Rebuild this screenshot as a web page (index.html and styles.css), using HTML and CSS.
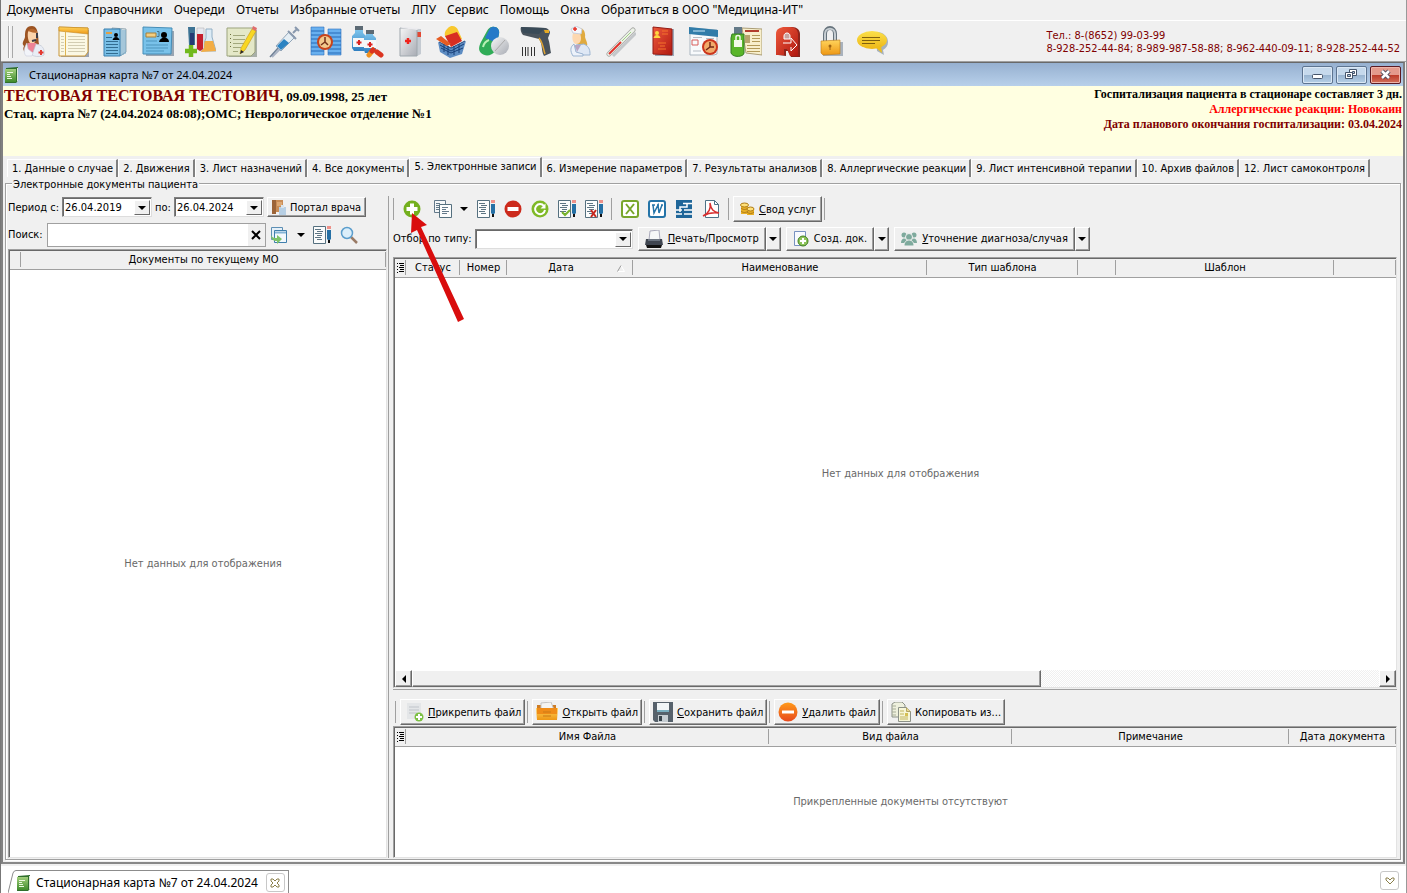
FILE: index.html
```
<!DOCTYPE html>
<html lang="ru">
<head>
<meta charset="utf-8">
<title>Стационарная карта №7 от 24.04.2024</title>
<link rel="stylesheet" href="styles.css">
</head>
<body>
<svg class="defs" aria-hidden="true">
  <defs>
    <linearGradient id="gBlue" x2="0" y2="1"><stop stop-color="#7cc4ec"/><stop offset="1" stop-color="#2f7fc0"/></linearGradient>
    <linearGradient id="gRed" x2="1" y2="1"><stop stop-color="#ee5a3c"/><stop offset="1" stop-color="#b01810"/></linearGradient>
    <linearGradient id="gGold" x2="0" y2="1"><stop stop-color="#ffd45c"/><stop offset="1" stop-color="#ee9714"/></linearGradient>
    <linearGradient id="gLemon" x2="0" y2="1"><stop stop-color="#fbe04a"/><stop offset="1" stop-color="#eeb818"/></linearGradient>
    <linearGradient id="gGreen" x2="0" y2="1"><stop stop-color="#a2cf7c"/><stop offset="1" stop-color="#3f8c2c"/></linearGradient>
    <linearGradient id="gGrey" x2="1" y2="1"><stop stop-color="#f6f6f6"/><stop offset="1" stop-color="#a8acb4"/></linearGradient>
    <linearGradient id="gOrange" x2="0" y2="1"><stop stop-color="#ff9a1a"/><stop offset="1" stop-color="#e8481c"/></linearGradient>
    <symbol id="down" viewBox="0 0 8 4"><path d="M0 0h8L4 4z"/></symbol>
    <symbol id="book" viewBox="0 0 16 16"><path d="M2 1l12-1v14l-2 2H1z" fill="#2f6f2c"/><path d="M1 2h11v13H1z" fill="url(#gGreen)"/><path d="M13 1h1v13l-1 1z" fill="#dfe9dc"/><path d="M3 5.500h6M3 7.500h3M3 9.500h4M3 11.500h5" stroke="#eaf7df"/></symbol>
    <symbol id="sheet" viewBox="0 0 18 18"><path d="M.5.5h12v17H.5z" fill="#fbfcfc" stroke="#55707f"/><path d="M2 3.500h6M4 5.500h6M2 7.500h7M4 9.500h5M2 11.500h6M4 13.500h5" stroke="#5d7583"/></symbol>
    <symbol id="pencil" viewBox="0 0 4 18"><path d="M0 0h4v3H0z" fill="#ee9189"/><path d="M0 4h4v9l-2 2-2-2z" fill="#2670a5"/><path d="M1 14h2v3H1z" fill="#111"/></symbol>
    <symbol id="marks" viewBox="0 0 8 10"><path d="M0 .5h1M0 3.500h1M0 6.500h1M0 9.500h1M2 .5h5M3 2.500h4M2 4.500h5M3 6.500h4M2 8.500h5" stroke="#000"/></symbol>
  </defs>
</svg>

<nav class="menu">
  <a href="#">Документы</a><a href="#">Справочники</a><a href="#">Очереди</a><a href="#">Отчеты</a><a href="#">Избранные отчеты</a><a href="#">ЛПУ</a><a href="#">Сервис</a><a href="#">Помощь</a><a href="#">Окна</a><a href="#">Обратиться в ООО "Медицина-ИТ"</a>
</nav>

<header class="toolbar">
  <div class="launchers">
    <button aria-label="Оператор"><svg viewBox="0 0 32 32"><path d="M16 0C9 0 9 6 9 11c-1 4-4 6-1 9-2 4 1 6 1 6l8-2 6-6c-1-6 0-18-7-18z" fill="#9c5423"/><path d="M12 6c1-3 8-3 9 1 0 6-2 11-5 11s-5-6-4-12z" fill="#fbd3ab"/><path d="M12 5c3-4 8-2 9 2-3 0-6-1-9-2z" fill="#b8692f"/><path d="M12 17h8l2 4-5 8-6-2z" fill="#ee8396"/><path d="M20 18c6 1 9 4 8 11-3 2-9 2-12 0z" fill="#e9edf5" stroke="#b9bfcc" stroke-width=".6"/><path d="M11 17c-3 5-4 9-1 13h6l1-3-5-4z" fill="#f2f4f9" stroke="#c9cedb" stroke-width=".6"/><path d="M21 7v5M16 15l4-1" stroke="#3b3b46" stroke-width="2"/><path d="M25 24v5M22.500 26.500h5" stroke="#e33a30" stroke-width="2"/></svg></button>
    <button aria-label="Журнал"><svg viewBox="0 0 32 32"><path d="M3 4h28v27H3z" fill="#9aa2b0"/><path d="M1 1l29 1v24l-3 4H1z" fill="#fbf8e4" stroke="#c9973a"/><path d="M1 1l29 1v6L1 5z" fill="url(#gGold)" stroke="#c58a25" stroke-width=".6"/><path d="M3 10.500h3M3 13.500h3M3 16.500h3M3 19.500h3M3 22.500h3M3 25.500h3M10 10.500h17M10 13.500h17M10 16.500h17M10 19.500h17M10 22.500h17M10 25.500h17" stroke="#d3cdb2"/><path d="M7.500 6v24" stroke="#ddb453"/></svg></button>
    <button aria-label="Картотека"><svg viewBox="0 0 32 32"><path d="M12 2l14 1v23l-6 4z" fill="#dfe8ec" stroke="#90a5b0"/><path d="M25 4v24M23 4v25M21 3v27" stroke="#6aa5c8"/><path d="M4 3h16v27H4z" fill="#79bfe6" stroke="#397fae"/><path d="M6 7h6" stroke="#e2a045" stroke-width="2"/><path d="M6 11.500h6M6 15.500h12M6 18.500h12M6 21.500h12M6 24.500h12M6 27.500h12" stroke="#326d91"/><circle cx="16" cy="9" r="2"/><path d="M12.500 14c1-4 6-4 7 0z"/></svg></button>
    <button aria-label="Карта пациента"><svg viewBox="0 0 32 32"><path d="M3 4l29 1v25L4 30z" fill="#98a5b2"/><path d="M1 1l29 1-1 26H1z" fill="#79c2ea" stroke="#458db7"/><path d="M4 7h10v4H4z" fill="#f3ce81" stroke="#a98038"/><path d="M15 5.500h2v5h-2" stroke="#41738f" fill="none"/><path d="M4 15h11M4 19h22M4 22h22M4 25h18" stroke="#4f95bd"/><circle cx="22" cy="9" r="3"/><path d="M17 16c1-6 10-6 10 0z"/></svg></button>
    <button aria-label="Анализы"><svg viewBox="0 0 32 32"><path d="M22 3h6v8l4 14H17l5-13z" fill="#dcebf5" stroke="#92afc5"/><path d="M21 15h8l3 10-15 1z" fill="#f3ad44"/><path d="M4 1h7v18H5z" fill="#3d7394"/><path d="M6 7h4v12H6z" fill="#243a73"/><path d="M13 2h7v20l-3 3-4-2z" fill="#e6e8ef" stroke="#aaa" stroke-width=".5"/><path d="M13 8h6v15l-3 2-3-2z" fill="#c51f2d"/><path d="M7 19v12M1 25h12" stroke="#71b91c" stroke-width="4.500"/></svg></button>
    <button aria-label="Запись"><svg viewBox="0 0 32 32"><path d="M3 4h28v27H3z" fill="#a8afa8"/><path d="M1 2h28v24l-4 4H1z" fill="#e4e8c8" stroke="#9ba37c"/><path d="M7 9.500h12M7 13.500h12M7 17.500h11M7 21.500h8M7 25.500h5" stroke="#a2a87d"/><path d="M4 8l1 1M4 12l1 1M4 16l1 1M4 20l1 1" stroke="#6e733f"/><path d="M26 3l4 2-11 19-5 4 1-6z" fill="#f8d722" stroke="#c79518" stroke-width=".6"/><path d="M26 3l1-3 4 2-1 3z" fill="#df6e6e"/><path d="M14 28l1-4 3 2z" fill="#27272c"/></svg></button>
    <button aria-label="Процедуры"><svg viewBox="0 0 32 32"><path d="M4 31l9-9" stroke="#a9b3c4" stroke-width="2"/><path d="M2 31l9-10" stroke="#6f8196" stroke-width="1.500"/><path d="M8 20L21 6l6 5-14 14z" fill="#e5eef4" stroke="#92a5b8"/><path d="M9 20l7-7 5 4-8 7z" fill="#2b83c2"/><path d="M25 7l4-4M27 1l4 4M20 5l8 8" stroke="#8999ae" stroke-width="2"/></svg></button>
    <button aria-label="Расписание"><svg viewBox="0 0 32 32"><path d="M1 1h13v28H1zM18 3h13v26H18z" fill="#68b0ef" stroke="#2d70bd" stroke-width=".6"/><path d="M1 5h13M1 9h13M1 13h13M1 17h13M1 21h13M1 25h13M18 7h13M18 11h13M18 15h13M18 19h13M18 23h13M18 27h13" stroke="#276ab7"/><circle cx="15" cy="16" r="8" fill="#c8441c"/><circle cx="15" cy="16" r="6" fill="#f2c98d"/><path d="M15 11v5l3 3M11 19l4-3" stroke="#743118" stroke-width="1.500" fill="none"/></svg></button>
    <button aria-label="Лекарства"><svg viewBox="0 0 32 32"><path d="M3 4h8v3l3 3v13l-2 2H2l-2-3V10l3-3z" fill="url(#gBlue)"/><path d="M14 7h7v2l3 3v13l-2 2h-9l-1-3V12l2-3z" fill="url(#gBlue)"/><path d="M3 0h8v4H3zM14 4h8v4h-8z" fill="#5c6a74"/><path d="M1 12h11v9H1zM12 14h12v8H12z" fill="#f5f7f8"/><path d="M7 14v5M4.500 16.500h5M18 16v5M15.500 18.500h5" stroke="#db2320" stroke-width="2"/><path d="M17 29l4-5" stroke="#f0901e" stroke-width="5" stroke-linecap="round"/><path d="M21 24l-1 1M25 26l4 3" stroke="#db3420" stroke-width="5" stroke-linecap="round"/></svg></button>
    <button aria-label="Медкнижка"><svg viewBox="0 0 32 32"><path d="M9 3h18v25l-4 2H9z" fill="#c4cad1"/><path d="M23 6h4v5h-4z" fill="#e34832"/><path d="M6 2l17 1v27H6z" fill="url(#gGrey)" stroke="#9ea7ad"/><path d="M6 2l3-1 17 1-3 2" fill="#ececef"/><path d="M14 12v6M11 15h6" stroke="#f0231c" stroke-width="2.500"/></svg></button>
    <button aria-label="Аптека"><svg viewBox="0 0 32 32"><path d="M12 2c4-4 9-1 10 2l4 9-11 6-6-9c-1-4 1-6 3-8z" fill="#f8c82e"/><path d="M9 10l12-4 5 9-11 6z" fill="#d82e22"/><path d="M2 16l13 6 15-7-4 13-12 4-10-6z" fill="#5d8cc2"/><path d="M3 16l12 6 14-7M4 19l11 6 13-7M5 22l10 5 12-5M8 18v8M12 20v9M18 20v9M23 18v9" fill="none" stroke="#173f78"/><path d="M0 13l5-3 10 8-4 2z" fill="#e65c22"/></svg></button>
    <button aria-label="Препараты"><svg viewBox="0 0 32 32"><path d="M14 1c5-1 8 3 7 7l-4 17c-3 5-10 6-14 2-3-3-2-7 0-11l6-11c1-2 3-4 5-4z" fill="#30ac57"/><path d="M14 1c5-1 8 3 7 7l-2 9-12-5 4-8c1-2 2-3 3-3z" fill="#2579c8"/><path d="M5 21c1-4 3-6 6-7" stroke="#baf0b5" stroke-width="2" fill="none"/><circle cx="22" cy="20" r="9" fill="url(#gGrey)"/><path d="M17 25l10-11" stroke="#aaa"/></svg></button>
    <button aria-label="Сканер"><svg viewBox="0 0 32 32"><path d="M1 1l25 1c3 1 4 3 4 5l-2 5c2 5 2 11 3 15l-7 3c-3-5-1-11-5-17L3 9C1 7 0 3 1 1z" fill="#49535c"/><path d="M1 1l24 1-6 6-16-1z" fill="#394a57"/><path d="M24 4h5v3h-4z" fill="#e5aa24"/><path d="M19 12c4 5 4 10 6 16" fill="none" stroke="#e0a435" stroke-width="1.500"/><path d="M2.500 21v9M5.500 21v9M8 21v9M11.500 21v9M14.500 21v9" stroke="#333"/></svg></button>
    <button aria-label="Врач"><svg viewBox="0 0 32 32"><path d="M12 3c8-4 12 2 11 8 1 4 3 6 2 9l-9-1-5-8z" fill="#e0aa3f"/><path d="M11 7c4-3 8 0 8 5s-3 6-5 6-5-4-3-11z" fill="#fdd8b0"/><path d="M9 3l5-3 6 3-1 5-8-1z" fill="#f5f7fb" stroke="#cbd0dc"/><path d="M13 1v4M11 3h4" stroke="#e73428" stroke-width="1.500"/><path d="M14 19l8-1c6 3 6 7 6 11H11z" fill="#dfe8f5" stroke="#9bb4d1"/><path d="M13 19h6l-4 7z" fill="#b9a5c4"/><path d="M12 18c-4 3-4 7-1 12h10v-2l-7-2z" fill="#edf2fa" stroke="#9bb4d1"/></svg></button>
    <button aria-label="Температура"><svg viewBox="0 0 32 32"><path d="M9 30L32 7" stroke="#c4c7ca" stroke-width="3"/><path d="M5 28L29 4" stroke="#a6a7a3" stroke-width="5" stroke-linecap="round"/><path d="M5 28L29 4" stroke="#edf2e8" stroke-width="3.500" stroke-linecap="round"/><path d="M5 28L17 16" stroke="#df332d" stroke-width="2"/><path d="M18 15L27 6" stroke="#9fcf86"/></svg></button>
    <button aria-label="Полис"><svg viewBox="0 0 32 32"><path d="M9 3h19v27H9z" fill="#9ca9b9"/><path d="M7 1l19 2v26L7 28z" fill="url(#gRed)" stroke="#941b14"/><circle cx="11" cy="7" r="2" fill="#ffd63f"/><path d="M7.500 12c1-4 6-4 7 0z" fill="#ffd63f"/><path d="M16 5h6M16 8h6M12 17h8M14 20h5M12 23h8" stroke="#f5742d"/></svg></button>
    <button aria-label="Календарь"><svg viewBox="0 0 32 32"><path d="M2 2l27 2v24l-3 1H2z" fill="#f8fafc" stroke="#abb6c0"/><path d="M1 1l29 3v7L1 8z" fill="#317ca9"/><path d="M5 5h12" stroke="#cde9f8"/><path d="M5 11.500h9M18 12.500h8M15 17h3M15 21h2M5 25h8" stroke="#b6bdc5"/><path d="M4 14h6v5H4z" fill="none" stroke="#d85e5d"/><circle cx="22" cy="21" r="8" fill="#cb361d"/><circle cx="22" cy="21" r="6" fill="#f1aa69"/><path d="M22 16v5h4M18 24l4-3" fill="none" stroke="#742816" stroke-width="1.500"/></svg></button>
    <button aria-label="Защита"><svg viewBox="0 0 32 32"><path d="M12 2l20 1v26l-16-2z" fill="#f8efcc" stroke="#aa9c75"/><path d="M15 5h14" stroke="#b23d2c" stroke-width="2"/><path d="M15 9h5v8h-5z" fill="#b7a46c"/><path d="M22 9.500h8M22 12.500h8M22 15.500h8M17 19.500h13M17 22.500h13M17 25.500h13" stroke="#b39a59"/><path d="M4 1h8v7H4z" fill="#647a88"/><path d="M2 8h12v19c0 4-11 5-13 0V12z" fill="#59b52a" stroke="#347e23"/><path d="M4 14h8v7H4z" fill="#f2fae9"/><path d="M6 14v-3c0-2 4-2 4 0v3" stroke="#f2fae9" stroke-width="1.500" fill="none"/></svg></button>
    <button aria-label="Регистр"><svg viewBox="0 0 32 32"><path d="M6 29V8c0-5 4-7 10-7h4c5 0 8 3 8 7v23h-9l-3-6h-2v5z" fill="#8d241b"/><path d="M4 29V8c0-5 4-7 9-7h5c5 0 8 3 8 7v22h-8l-3-7h-3v6z" fill="url(#gRed)"/><path d="M12 13v-3c0-4 6-4 6 0v3z" fill="#c9a29e" stroke="#fff"/><path d="M11 17h8v-5l6 7-6 6v-4" fill="none" stroke="#fff"/></svg></button>
    <button aria-label="Блокировка"><svg viewBox="0 0 32 32"><path d="M9 16h20v14H9z" fill="#a9b2bd"/><path d="M11 15V8c0-8 10-8 10 0v7" fill="none" stroke="#66737c" stroke-width="4"/><path d="M11 15V8c0-7 10-7 10 0v7" fill="none" stroke="#c5ccd1" stroke-width="2"/><path d="M7 15l19-1v14L9 29l-2-2z" fill="url(#gGold)" stroke="#bd7b18" stroke-width=".6"/><circle cx="16" cy="20" r="1.500" fill="#a16512"/><path d="M16 20v4" stroke="#a16512"/></svg></button>
    <button aria-label="Сообщения"><svg viewBox="0 0 32 32"><path d="M20 6c8 0 12 5 12 10 0 4-2 6-5 8l1 5-7-4" fill="#a7b2bd"/><ellipse cx="16" cy="14" rx="15" ry="9" fill="url(#gLemon)"/><path d="M19 21l7 6-1-8z" fill="#efbe1b"/><path d="M6 11.500h18M6 14.500h18M6 17.500h13" stroke="#80600f"/></svg></button>
  </div>
  <address class="phones">Тел.: 8-(8652) 99-03-99<br>8-928-252-44-84; 8-989-987-58-88; 8-962-440-09-11; 8-928-252-44-52</address>
</header>

<main class="window">
  <div class="titlebar">
    <svg class="i16"><use href="#book"/></svg>
    <h1>Стационарная карта №7 от 24.04.2024</h1>
    <button class="wbtn" aria-label="Свернуть"><svg viewBox="0 0 29 16"><rect x="9.500" y="7.500" width="10" height="4" rx="1" fill="#fff" stroke="#46556b"/></svg></button>
    <button class="wbtn" aria-label="Восстановить"><svg viewBox="0 0 29 16"><path d="M12.500 2.500h7v6h-7z" fill="#fff" stroke="#46556b"/><path d="M15.500 4.500h2v2h-2z" stroke="#46556b" fill="#b7cbe0"/><path d="M8.500 5.500h7v6h-7z" fill="#fff" stroke="#46556b"/><path d="M10.500 7.500h3v2h-3z" stroke="#46556b" fill="#b7cbe0"/></svg></button>
    <button class="wbtn close" aria-label="Закрыть"><svg viewBox="0 0 29 16"><path d="M11 4l7 7M18 4l-7 7" stroke="#4b4a5a" stroke-width="4.500"/><path d="M11 4l7 7M18 4l-7 7" stroke="#fff" stroke-width="2.500"/></svg></button>
  </div>

  <section class="patient">
    <div>
      <p class="name"><b>ТЕСТОВАЯ ТЕСТОВАЯ ТЕСТОВИЧ</b>, 09.09.1998, 25 лет</p>
      <p>Стац. карта №7 (24.04.2024 08:08);ОМС; Неврологическое отделение №1</p>
    </div>
    <div class="alerts">
      <p>Госпитализация пациента в стационаре составляет 3 дн.</p>
      <p class="allergy">Аллергические реакции: Новокаин</p>
      <p class="plan">Дата планового окончания госпитализации: 03.04.2024</p>
    </div>
  </section>

  <div class="tabs" role="tablist">
    <button role="tab">1. Данные о случае</button><button role="tab">2. Движения</button><button role="tab">3. Лист назначений</button><button role="tab">4. Все документы</button><button role="tab" class="active" aria-selected="true">5. Электронные записи</button><button role="tab">6. Измерение параметров</button><button role="tab">7. Результаты анализов</button><button role="tab">8. Аллергические реакции</button><button role="tab">9. Лист интенсивной терапии</button><button role="tab">10. Архив файлов</button><button role="tab">12. Лист самоконтроля</button>
  </div>

  <section class="group">
    <h2>Электронные документы пациента</h2>
    <div class="split">
      <section class="left">
        <div class="row">
          <label for="from">Период с:</label>
          <span class="combo date"><input id="from" value="26.04.2019"><button aria-label="Выбрать дату начала"><svg class="dn"><use href="#down"/></svg></button></span>
          <label for="to">по:</label>
          <span class="combo date"><input id="to" value="26.04.2024"><button aria-label="Выбрать дату окончания"><svg class="dn"><use href="#down"/></svg></button></span>
          <button class="btn portal"><svg class="i16" viewBox="0 0 16 16"><path d="M1 1h11v12H1z" fill="#c98c55"/><path d="M1 1h4v14H1z" fill="#9c6438"/><path d="M6 3h5v4H6z" fill="#dda873"/><path d="M8 8h7v8H8z" fill="#b7cfe4"/><path d="M10 6h3v3h-3z" fill="#d8e5ef"/></svg>Портал врача</button>
        </div>
        <div class="row search">
          <label for="find">Поиск:</label>
          <span class="find"><input id="find"><button aria-label="Очистить"><svg viewBox="0 0 10 10"><path d="M1 1l8 8M9 1L1 9" stroke="#000" stroke-width="2"/></svg></button></span>
          <button class="ico" aria-label="Обновить список"><svg class="i18" viewBox="0 0 18 18"><path d="M1.500 1.500h11v12h-11z" fill="#e5f0f8" stroke="#5d8fb4"/><path d="M4.500 4.500h12v12h-12z" fill="#f2f8fc" stroke="#3f7fac"/><path d="M5 6.500h11" stroke="#84b4d6" stroke-width="2"/><path d="M1 9c1 3 4 3 6 3V9l5 4-5 5v-3c-4 0-6-2-6-6z" fill="#7dc36a"/></svg></button>
          <button class="drop" aria-label="Варианты"><svg class="dn"><use href="#down"/></svg></button>
          <button class="ico" aria-label="Изменить"><svg class="i18" viewBox="0 0 18 18"><use href="#sheet" width="18" height="18"/><use href="#pencil" x="14" width="4" height="18"/></svg></button>
          <button class="ico" aria-label="Найти"><svg class="i18" viewBox="0 0 18 18"><path d="M11 11l6 6" stroke="#9a7b66" stroke-width="2.500"/><circle cx="7" cy="7" r="5.500" fill="#dbeefa" stroke="#5b9dcc" stroke-width="1.500"/></svg></button>
        </div>
        <div class="grid">
          <table><colgroup><col class="c-mark"><col></colgroup><thead><tr><th></th><th>Документы по текущему МО</th></tr></thead></table>
          <p class="empty">Нет данных для отображения</p>
        </div>
      </section>

      <section class="right">
        <svg class="pointer" viewBox="0 0 56 112" aria-hidden="true"><path d="M1 1l15 12-6 2 43 92-6 3L6 18l-6 3z" fill="#d90d0d"/></svg>
        <div class="row tools">
          <i class="edge"></i>
          <button class="ico" aria-label="Добавить"><svg class="i18" viewBox="0 0 18 18"><circle cx="9" cy="9" r="8.500" fill="#74b01e"/><path d="M9 3.500v11M3.500 9h11" stroke="#fff" stroke-width="4"/></svg></button>
          <button class="ico copy" aria-label="Копировать"><svg class="i18" viewBox="0 0 18 18"><path d="M.5.500h11v12H.5z" fill="#f5f7f8" stroke="#63798a"/><path d="M2 3.500h4M2 5.500h3M2 7.500h3M2 9.500h3" stroke="#63798a"/><path d="M5.500 4.500h12v13h-12z" fill="#fbfcfc" stroke="#55707f"/><path d="M8 7.500h6M8 9.500h4M8 11.500h7M8 13.500h5" stroke="#63798a"/></svg></button>
          <button class="drop" aria-label="Варианты копирования"><svg class="dn"><use href="#down"/></svg></button>
          <button class="ico" aria-label="Редактировать"><svg class="i18" viewBox="0 0 18 18"><use href="#sheet" width="18" height="18"/><use href="#pencil" x="14" width="4" height="18"/></svg></button>
          <button class="ico" aria-label="Удалить"><svg class="i18" viewBox="0 0 18 18"><circle cx="9" cy="9" r="8.500" fill="#cc2a1c"/><path d="M3.500 9h11" stroke="#fff" stroke-width="4"/></svg></button>
          <button class="ico" aria-label="Обновить"><svg class="i18" viewBox="0 0 18 18"><circle cx="9" cy="9" r="8.500" fill="#7fb927"/><path d="M13 6a5 5 0 1 0 1 4" fill="none" stroke="#fff" stroke-width="2"/><path d="M14.500 3.500v5h-5z" fill="#fff"/></svg></button>
          <button class="ico" aria-label="Подписать"><svg class="i18" viewBox="0 0 18 18"><use href="#sheet" width="18" height="18"/><use href="#pencil" x="14" width="4" height="18"/><path d="M4 12l3 3 5-5" fill="none" stroke="#78b42a" stroke-width="2"/></svg></button>
          <button class="ico" aria-label="Отозвать"><svg class="i18" viewBox="0 0 18 18"><use href="#sheet" width="18" height="18"/><use href="#pencil" x="14" width="4" height="18"/><path d="M6 10l5 7M11 10l-5 7" stroke="#c8281f" stroke-width="2"/></svg></button>
          <i class="sep"></i>
          <button class="ico" aria-label="Excel"><svg class="i18" viewBox="0 0 18 18"><rect x="1" y="1" width="16" height="16" rx="2" fill="#fff" stroke="#78a62c" stroke-width="2"/><path d="M5 4l8 10M13 4L5 14" stroke="#78a62c" stroke-width="2"/></svg></button>
          <button class="ico" aria-label="Word"><svg class="i18" viewBox="0 0 18 18"><rect x="1" y="1" width="16" height="16" rx="2" fill="#fff" stroke="#2474a8" stroke-width="2"/><path d="M4 5h3M5 5l1 8 4-8 1 8 3-8M9 5h2M13 5h2" fill="none" stroke="#2474a8" stroke-width="1.500"/></svg></button>
          <button class="ico" aria-label="Структура"><svg class="i18" viewBox="0 0 18 18"><path d="M1 0h16v18H1z" fill="#1f6699"/><path d="M8 3.500h9M1 10h6M1 14h6M9 10h8M9 14h8" stroke="#fff" stroke-width="1.500"/><path d="M12 3v4H5v5" fill="none" stroke="#fff" stroke-width="1.500"/></svg></button>
          <button class="ico" aria-label="PDF"><svg class="i18" viewBox="0 0 18 18"><path d="M3.500.500h9l4 4v13h-13z" fill="#fff" stroke="#4e7287"/><path d="M12.500.500v4h4" fill="none" stroke="#4e7287"/><path d="M1 16c6-3 8-8 7-13 1 7 4 9 9 10-6-1-11 0-16 3z" fill="none" stroke="#d72f2f" stroke-width="1.500"/></svg></button>
          <i class="sep"></i>
          <button class="btn sum"><svg class="i16" viewBox="0 0 16 16"><path d="M2 4h7v9H2zM8 7h7v7H8z" fill="#e8af26"/><ellipse cx="5.500" cy="4" rx="4" ry="2" fill="#ffe079" stroke="#ae7b17"/><path d="M2 7c2 2 5 2 7 0M2 10c2 2 5 2 7 0M8 11c2 2 5 2 7 0" fill="none" stroke="#ae7b17"/><ellipse cx="11.500" cy="8" rx="3.500" ry="2" fill="#ffe079" stroke="#ae7b17"/></svg><span><u>С</u>вод услуг</span></button>
          <i class="edge"></i>
        </div>
        <div class="row filter">
          <label for="type">Отбор по типу:</label>
          <span class="combo type"><select id="type"><option></option></select><span class="face"><svg class="dn"><use href="#down"/></svg></span></span>
          <span class="duo"><button class="btn"><svg class="i18" viewBox="0 0 18 18"><path d="M5 1l9-1 1 10H4z" fill="#f6f7f8" stroke="#aab"/><path d="M1 9h16l1 6H0z" fill="#3f4550"/><path d="M3 10h12" stroke="#98a3b1"/><path d="M1 15h16l-1 3H2z" fill="#111"/></svg><span><u>П</u>ечать/Просмотр</span></button><button class="btn more" aria-label="Варианты печати"><svg class="dn"><use href="#down"/></svg></button></span>
          <span class="duo"><button class="btn"><svg class="i16" viewBox="0 0 16 16"><path d="M1.500.500h11v14h-11z" fill="#f8fafe" stroke="#7791c0"/><circle cx="10" cy="10" r="5" fill="#8dc35a" stroke="#3f7f1c"/><path d="M10 7v6M7 10h6" stroke="#fff" stroke-width="2"/></svg>Созд. док.</button><button class="btn more" aria-label="Варианты создания"><svg class="dn"><use href="#down"/></svg></button></span>
          <span class="duo"><button class="btn"><svg class="i16" viewBox="0 0 16 16" fill="#7eaa9d"><circle cx="3" cy="4" r="2.500"/><circle cx="13" cy="4" r="2.500"/><circle cx="8" cy="6" r="3.500" stroke="#f0f0f0"/><path d="M0 12c0-6 6-6 6 0zM10 12c0-6 6-6 6 0z"/><path d="M3 15c0-8 10-8 10 0z" stroke="#f0f0f0"/></svg><span><u>У</u>точнение диагноза/случая</span></button><button class="btn more" aria-label="Варианты уточнения"><svg class="dn"><use href="#down"/></svg></button></span>
        </div>
        <div class="grid main">
          <table>
            <colgroup><col class="c-mark"><col class="c-status"><col class="c-num"><col class="c-date"><col class="c-name"><col class="c-kind"><col class="c-flag"><col class="c-tpl"><col></colgroup>
            <thead><tr><th><svg class="marks"><use href="#marks"/></svg></th><th>Статус</th><th>Номер</th><th class="sorted">Дата<svg class="sort" viewBox="0 0 8 7"><path d="M.5 6.500h7L4 .5" fill="none" stroke="#fff"/><path d="M.5 6.500L4 .5" stroke="#999"/></svg></th><th>Наименование</th><th>Тип шаблона</th><th></th><th>Шаблон</th><th></th></tr></thead>
          </table>
          <p class="empty">Нет данных для отображения</p>
          <div class="scroll"><button class="btn" aria-label="Влево"><svg viewBox="0 0 4 8"><path d="M4 0v8L0 4z"/></svg></button><div class="track"><div class="thumb"></div></div><button class="btn" aria-label="Вправо"><svg viewBox="0 0 4 8"><path d="M0 0v8l4-4z"/></svg></button></div>
        </div>
        <div class="files">
          <i class="edge"></i>
          <button class="btn"><svg class="i20" viewBox="0 0 20 20"><path d="M3 1h14v16H3z" fill="#e4e6e8"/><path d="M5 5h10M5 8h10M5 11h8" stroke="#d2d5d9" stroke-width="2"/><circle cx="15" cy="15" r="4.500" fill="#7cc043"/><path d="M15 12v6M12 15h6" stroke="#fff" stroke-width="2"/></svg><span><u>П</u>рикрепить файл</span></button>
          <i class="edge"></i>
          <button class="btn"><svg class="i22" viewBox="0 0 22 20"><path d="M1 3h19v8H1z" fill="#cd7c24"/><path d="M5 1l10-1 3 8H5z" fill="#f4f4f2" stroke="#c2c2c2"/><path d="M0 6h22l-1 12H1z" fill="url(#gGold)"/><path d="M1 6h20v6H1z" fill="#f08c18"/><path d="M7 10h8M7 14h8" stroke="#c97a17"/></svg><span><u>О</u>ткрыть файл</span></button>
          <i class="edge"></i>
          <button class="btn"><svg class="i20" viewBox="0 0 20 20"><path d="M0 0h20v20H2l-2-2z" fill="#56616b"/><path d="M4 1h12v9H4z" fill="#f1f5f7"/><path d="M4 8h12v2H4z" fill="#79aebf"/><path d="M5 13h10v7H5z" fill="#c6cdd2"/><path d="M6 14h3v5H6z" fill="#37424a"/></svg><span><u>С</u>охранить файл</span></button>
          <i class="edge"></i>
          <button class="btn"><svg class="i20" viewBox="0 0 20 20"><circle cx="10" cy="10" r="9.500" fill="url(#gOrange)"/><path d="M4 10h12" stroke="#fff" stroke-width="3"/></svg><span><u>У</u>далить файл</span></button>
          <i class="edge"></i>
          <button class="btn"><svg class="i20" viewBox="0 0 20 20"><path d="M1 2l3-2h7l3 3v12H1z" fill="#eef0dd" stroke="#8c9188"/><path d="M1 4h4M1 7h4M1 10h4M1 13h4" stroke="#a8ad98"/><path d="M7.500 5.500h8l4 4v10h-12z" fill="#f7f6d6" stroke="#8c9188"/><path d="M15.500 5.500v4h4" fill="#ecd98b" stroke="#b2a563"/><path d="M9 9h4M9 12h4M9 15h8M9 17h8" stroke="#c1b45e"/><path d="M14 11h3v3h-3z" fill="#d5c053"/></svg>Копировать из...</button>
        </div>
        <div class="grid attach">
          <table>
            <colgroup><col class="c-mark"><col class="p-file"><col class="p-kind"><col class="p-note"><col></colgroup>
            <thead><tr><th><svg class="marks"><use href="#marks"/></svg></th><th>Имя Файла</th><th>Вид файла</th><th>Примечание</th><th>Дата документа</th></tr></thead>
          </table>
          <p class="empty">Прикрепленные документы отсутствуют</p>
        </div>
      </section>
    </div>
  </section>
</main>

<footer class="dock">
  <svg class="slant" viewBox="0 0 8 23"><path d="M0 23L5 3Q6 .5 8 .5" fill="none" stroke="#8c8c8c"/></svg>
  <div class="doc"><svg class="i16"><use href="#book"/></svg><a href="#">Стационарная карта №7 от 24.04.2024</a><button aria-label="Закрыть вкладку"><svg viewBox="0 0 10 10"><path d="M1 1h2l2 2 2-2h2v2L7 5l2 2v2H7L5 7 3 9H1V7l2-2-2-2z" fill="#fff" stroke="#8a7f4a"/></svg></button></div>
  <button class="all" aria-label="Список окон"><svg viewBox="0 0 10 8"><path d="M1 1h2l2 2 2-2h2v2L5 7 1 3z" fill="#fff" stroke="#8a7f4a"/></svg></button>
</footer>
</body>
</html>
```
FILE: styles.css
```
* { box-sizing: border-box; }
body {
  margin: 0;
  min-height: 100vh;
  display: flex;
  flex-direction: column;
  background: #f0f0f0;
  color: #000;
  font: 11px/13px "DejaVu Sans Condensed", "Noto Sans", sans-serif;
  border-left: 1px solid #777;
  border-right: 1px solid #999;
}
button, input, select { font: inherit; color: inherit; margin: 0; padding: 0; border: 0; background: none; border-radius: 0; }
button { display: flex; align-items: center; justify-content: center; white-space: nowrap; }
p, h1, h2 { margin: 0; }
a { color: inherit; text-decoration: none; }
svg { display: block; flex: none; }
.defs { position: absolute; width: 0; height: 0; }
.i16 { width: 16px; height: 16px; }
.i18 { width: 18px; height: 18px; }
.i20 { width: 20px; height: 20px; }
.i22 { width: 22px; height: 20px; }
.dn { width: 8px; height: 4px; }

.menu { display: flex; gap: 11px; height: 20px; padding-left: 6px; font: 12px/20px "Noto Sans", sans-serif; white-space: nowrap; }
.toolbar { display: flex; align-items: center; justify-content: space-between; height: 42px; padding: 1px 6px 0 7px; border-top: 1px solid #fff; border-bottom: 1px solid #a0a0a0; }
.launchers { display: flex; gap: 10px; padding-left: 7px; border-left: 1px solid #a8a8a8; box-shadow: inset 1px 0 #fff, inset 3px 0 #f0f0f0, inset 4px 0 #a8a8a8; }
.launchers svg { width: 32px; height: 32px; }
.phones { font-style: normal; color: #800000; white-space: nowrap; }

.window { flex: 1; display: flex; flex-direction: column; margin: 0 1px 2px 0; border: 2px solid #808080; border-top: 1px solid #696969; border-bottom-color: #888; }
.titlebar { display: flex; align-items: center; gap: 4px; height: 23px; padding: 0 2px 0 1px; background: linear-gradient(#96b0d0, #b8d0ea); }
.titlebar h1 { flex: 1; padding-left: 5px; font: 11px/22px "Noto Sans", sans-serif; }
.wbtn { width: 31px; height: 18px; border: 1px solid #5d7490; border-radius: 2px; background: linear-gradient(#c6d9ec 50%, #98b3cf 50%, #b6d0e8); box-shadow: inset 0 0 0 1px #dbe8f5; }
.wbtn + .wbtn { margin-left: -1px; }
.wbtn svg { width: 29px; height: 16px; }
.wbtn.close { border-color: #5c1a22; background: linear-gradient(#e49a8c 50%, #bd3a28 50%, #d2705a); box-shadow: inset 0 0 0 1px #eeb5aa; }

.patient { display: flex; justify-content: space-between; height: 70px; padding: 0 1px; background: #ffffe1; font: bold 13px/15px "Liberation Serif", serif; }
.name { line-height: 19px; }
.name b { font-size: 16px; color: #800000; }
.alerts { padding-top: 1px; text-align: right; font-size: 12px; }
.allergy { color: #f00; }
.plan { color: #800000; }

.tabs { display: flex; align-items: flex-end; height: 21px; padding-left: 4px; }
.tabs button { height: 18px; padding: 0 3px 0 4px; border: 1px solid #fff; border-right: 2px solid #808080; border-bottom: 0; }
.tabs .active { height: 20px; padding-bottom: 2px; }

.group { flex: 1; display: flex; flex-direction: column; min-width: 0; margin: 6px 2px 2px; padding: 0 3px 1px 2px; border: 1px solid #a0a0a0; box-shadow: inset 1px 1px #fff, 1px 1px #fff; }
.group h2 { align-self: flex-start; margin: -6px 0 5px 4px; padding: 0 1px; font: inherit; background: #f0f0f0; }
.split { flex: 1; display: flex; gap: 4px; min-width: 0; }
.left { width: 381px; display: flex; flex-direction: column; border-right: 1px solid #a0a0a0; }
.row { display: flex; align-items: center; white-space: nowrap; }
.left .row { gap: 3px; height: 22px; }
.left .search { gap: 0; height: 31px; padding-top: 2px; }
.search label { margin-right: 4px; }
.combo { position: relative; display: flex; height: 20px; border: 1px solid #808080; border-right-color: #ddd; border-bottom-color: #ddd; background: #fff; box-shadow: inset 1px 1px #696969; }
.combo input, .combo select { flex: 1; min-width: 0; padding-left: 2px; appearance: none; outline: 0; }
.combo button, .face { display: flex; align-items: center; justify-content: center; width: 16px; margin: 2px 1px 1px 0; background: #f0f0f0; border: 1px solid #fff; border-right-color: #696969; border-bottom-color: #696969; }
.date { width: 90px; }
.find { display: flex; width: 219px; height: 24px; border: 1px solid #a0a0a0; background: #fff; }
.find input { flex: 1; min-width: 0; outline: 0; }
.find button { width: 17px; background: #f0f0f0; }
.find svg { width: 10px; height: 10px; }
.btn { gap: 4px; background: #f0f0f0; border: 1px solid #fff; border-right-color: #696969; border-bottom-color: #696969; box-shadow: inset -1px -1px #a0a0a0; }
.portal { height: 20px; padding: 0 4px 0 3px; gap: 3px; }
.ico { width: 27px; height: 22px; }
.drop { width: 16px; height: 22px; }

.grid { display: flex; flex-direction: column; background: #fff; border: 1px solid #a0a0a0; border-right-color: #e3e3e3; border-bottom-color: #e3e3e3; box-shadow: inset 1px 1px #696969; padding: 1px 0 0 1px; }
.left .grid { flex: 1; margin-right: 1px; }
table { width: 100%; table-layout: fixed; border-collapse: collapse; }
th { height: 18px; padding: 0; font-weight: normal; background: linear-gradient(#a0a0a0, #a0a0a0) right center / 1px 15px no-repeat #f0f0f0; border-bottom: 1px solid #a0a0a0; white-space: nowrap; overflow: hidden; }
.marks { width: 8px; height: 10px; margin: auto; }
.c-mark { width: 11px; }
.c-status { width: 54px; }
.c-num { width: 47px; }
.c-date { width: 126px; }
.c-name { width: 294px; }
.c-kind { width: 151px; }
.c-flag { width: 38px; }
.c-tpl { width: 218px; }
.p-file { width: 363px; }
.p-kind { width: 243px; }
.p-note { width: 277px; }
.sorted { position: relative; padding-right: 18px; }
.sort { position: absolute; right: 8px; top: 6px; width: 8px; height: 7px; }
.empty { flex: 1; display: flex; align-items: center; justify-content: center; padding-left: 10px; color: #696969; }

.right { position: relative; flex: 1; min-width: 0; display: flex; flex-direction: column; }
.pointer { position: absolute; z-index: 2; left: 18px; top: 16px; width: 56px; height: 112px; pointer-events: none; }
.tools { height: 26px; }
.edge { flex: none; width: 1px; height: 22px; margin: 0 4px 0 1px; background: #a0a0a0; }
.tools .edge { margin: 0 4px 0 0; }
.copy { margin-left: 4px; }
.sep { width: 1px; height: 22px; margin: 0 4px; background: #a0a0a0; }
.sum { height: 26px; padding: 0 5px; }
.tools .sum + .edge { margin: 0 2px; }
.filter { height: 33px; margin-bottom: 2px; gap: 5px; }
.filter label { margin-right: -2px; }
.type { width: 158px; }
.duo { display: flex; height: 24px; }
.duo .btn { gap: 5px; padding: 0 6px; }
.duo .more { width: 15px; padding: 0; }
.main { flex: 1; }
.scroll { display: flex; height: 17px; }
.scroll .btn { width: 17px; }
.scroll svg { width: 4px; height: 8px; }
.track { flex: 1; background: repeating-conic-gradient(#f0f0f0 0 25%, #fff 0 50%) 0 0 / 2px 2px; }
.thumb { width: 65%; height: 17px; background: #f0f0f0; border: 1px solid #fff; border-right-color: #696969; border-bottom-color: #696969; box-shadow: inset -1px -1px #a0a0a0; }
.files { display: flex; align-items: center; height: 37px; margin-top: 1px; padding: 8px 0 0 1px; border-top: 1px solid #a0a0a0; }
.files .btn { height: 26px; padding: 0 3px; margin-right: 1px; }
.attach { height: 132px; }

.dock { display: flex; height: 27px; padding: 4px 7px 0 7px; background: #fff; }
.slant { width: 8px; height: 23px; }
.doc { display: flex; align-items: center; gap: 4px; height: 23px; padding: 1px 3px 0 0; border-top: 1px solid #8c8c8c; border-right: 1px solid #8c8c8c; font: 12px/20px "Noto Sans", sans-serif; }
.doc a { margin-right: 4px; }
.doc button, .all { width: 19px; height: 19px; border: 1px solid #c8c8c8; border-radius: 3px; }
.doc button svg, .all svg { width: 10px; height: 10px; }
.all { margin: 1px 0 0 auto; }
```
